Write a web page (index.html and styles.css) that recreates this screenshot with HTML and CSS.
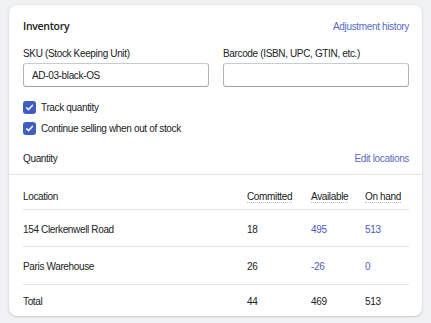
FILE: index.html
```html
<!DOCTYPE html>
<html lang="en">
<head>
    <meta charset="UTF-8">
    <title>Inventory</title>
    <link rel="stylesheet" href="styles.css">
</head>
<body>
    <div class="card">
        <div class="card-section">
            <!-- Header -->
            <div class="card-header">
                <h2>Inventory</h2>
                <a class="link" href="#">Adjustment history</a>
            </div>

            <!-- SKU and Barcode -->
            <div class="field-row">
                <div class="field">
                    <label for="sku">SKU (Stock Keeping Unit)</label>
                    <input id="sku" type="text" value="AD-03-black-OS">
                </div>
                <div class="field">
                    <label for="barcode">Barcode (ISBN, UPC, GTIN, etc.)</label>
                    <input id="barcode" type="text">
                </div>
            </div>

            <!-- Checkboxes -->
            <div class="checks">
                <label class="check">
                    <span class="box">
                        <svg viewBox="0 0 13 13" width="13" height="13"><polyline points="3.6,6.8 5.6,8.6 9.4,4.4" fill="none" stroke="#fff" stroke-width="1.5" stroke-linecap="round" stroke-linejoin="round"/></svg>
                    </span>
                    Track quantity
                </label>
                <label class="check">
                    <span class="box">
                        <svg viewBox="0 0 13 13" width="13" height="13"><polyline points="3.6,6.8 5.6,8.6 9.4,4.4" fill="none" stroke="#fff" stroke-width="1.5" stroke-linecap="round" stroke-linejoin="round"/></svg>
                    </span>
                    Continue selling when out of stock
                </label>
            </div>

            <div class="sub-header">
                <h3>Quantity</h3>
                <a class="link" href="#">Edit locations</a>
            </div>
        </div>

        <!-- Quantity table -->
        <div class="table-section">
            <table class="qty-table">
                <colgroup>
                    <col class="col-location">
                    <col class="col-committed">
                    <col class="col-available">
                    <col>
                </colgroup>
                <thead>
                    <tr>
                        <th>Location</th>
                        <th><span class="hint">Committed</span></th>
                        <th><span class="hint">Available</span></th>
                        <th><span class="hint">On hand</span></th>
                    </tr>
                </thead>
                <tbody>
                    <tr class="row-tall">
                        <td>154 Clerkenwell Road</td>
                        <td>18</td>
                        <td class="num-link">495</td>
                        <td class="num-link">513</td>
                    </tr>
                    <tr class="row-tall2">
                        <td>Paris Warehouse</td>
                        <td>26</td>
                        <td class="num-link">-26</td>
                        <td class="num-link">0</td>
                    </tr>
                    <tr class="row-total">
                        <td>Total</td>
                        <td>44</td>
                        <td>469</td>
                        <td>513</td>
                    </tr>
                </tbody>
            </table>
        </div>
    </div>
</body>
</html>
```

FILE: styles.css
```css
body {
    margin: 0;
    padding: 5px 9px;
    background-color: #f1f2f4;
    font-family: 'Liberation Sans', Arial, sans-serif;
    font-size: 10px;
    letter-spacing: -0.35px;
    color: #202223;
}

.card {
    width: 413px;
    background-color: #ffffff;
    border-radius: 8px;
    box-shadow: 0 0 4px rgba(23, 24, 24, 0.06), 0 1px 2px rgba(0, 0, 0, 0.14);
}

.card-section {
    padding: 11px 13px 9px 14px;
    border-bottom: 1px solid #e1e3e5;
}

/* Header */
.card-header,
.sub-header {
    display: flex;
    justify-content: space-between;
    align-items: center;
}
.card-header {
    height: 20px;
}
.card-header h2 {
    margin: 0;
    font-family: 'Open Sans', 'Liberation Sans', sans-serif;
    font-size: 10.5px;
    font-weight: 600;
    letter-spacing: -0.3px;
}
.link {
    color: #5c6ac4;
    text-decoration: none;
}

/* Fields */
.field-row {
    display: grid;
    grid-template-columns: 1fr 1fr;
    gap: 14px;
    margin-top: 11px;
}
.field label {
    display: block;
    line-height: 14px;
    margin-bottom: 2px;
}
.field input {
    display: block;
    box-sizing: border-box;
    width: 100%;
    height: 24px;
    margin: 0;
    padding: 0 8px;
    border: 1px solid #aeb4b9;
    border-top-color: #c4cdd5;
    border-bottom-color: #9ca3a9;
    border-radius: 3px;
    font-family: inherit;
    font-size: 10px;
    letter-spacing: -0.35px;
    color: #202223;
}

/* Checkboxes */
.checks {
    display: flex;
    flex-direction: column;
    gap: 4px;
    margin-top: 12px;
}
.check {
    display: flex;
    align-items: center;
    gap: 5px;
    height: 17px;
}
.box {
    display: flex;
    width: 13px;
    height: 13px;
    border-radius: 3px;
    background-color: #3f5cc0;
}

.sub-header {
    margin-top: 14px;
    height: 14px;
}
.sub-header h3 {
    margin: 0;
    font-size: 10px;
    font-weight: normal;
    color: #202223;
}

/* Table */
.table-section {
    padding: 0 13px 0 14px;
}
.qty-table {
    width: 100%;
    border-collapse: collapse;
}
.col-location {
    width: 224px;
}
.col-committed {
    width: 64px;
}
.col-available {
    width: 54px;
}
.qty-table th {
    text-align: left;
    font-weight: normal;
    line-height: 12px;
    padding: 16px 0 6px;
    border-bottom: 1px solid #e1e3e5;
}
.hint {
    border-bottom: 1px dotted #babfc3;
}
.qty-table td {
    padding: 3px 0 0;
    line-height: 12px;
}
.row-tall td {
    height: 33px;
    border-bottom: 1px solid #e1e3e5;
}
.row-tall2 td {
    height: 34px;
    border-bottom: 1px solid #e1e3e5;
}
.row-total td {
    height: 28px;
}
.num-link {
    color: #4b5bc0;
}
```
